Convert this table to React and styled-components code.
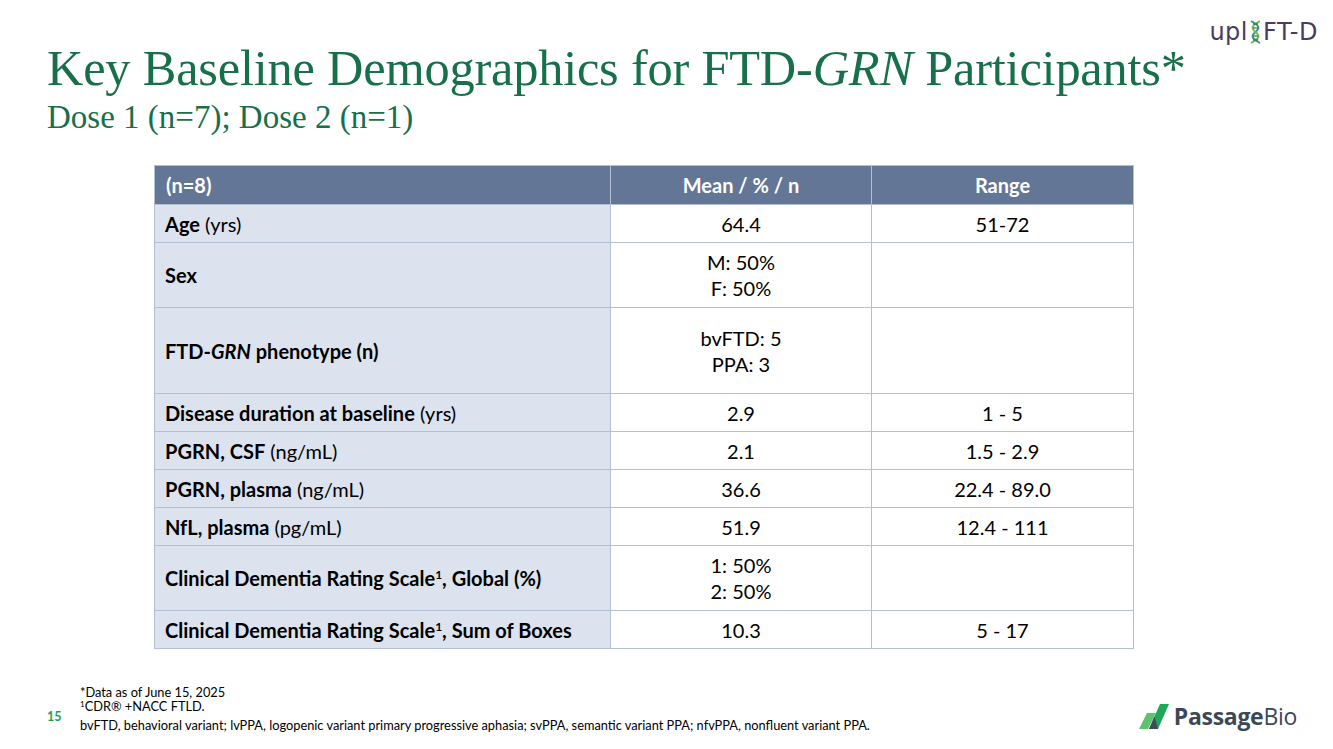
import React from 'react'
import styled, { createGlobalStyle } from 'styled-components'

const Global = createGlobalStyle`
  html, body { margin: 0; padding: 0; background: #fff; }
  body { width: 1333px; height: 749px; overflow: hidden; }
`

const Slide = styled.div`
  width: 1333px;
  height: 749px;
  box-sizing: border-box;
  display: flex;
  flex-direction: column;
  padding: 0 15px 0 47px;
  font-family: Lato, "Open Sans", sans-serif;
`

const Header = styled.div`
  display: flex;
  justify-content: space-between;
  align-items: flex-start;
`

const Titles = styled.div`
  padding-top: 40px;
  font-family: "Liberation Serif", "Times New Roman", serif;
  color: #17704a;
`

const Title = styled.h1`
  margin: 0;
  font-weight: normal;
  font-size: 50.4px;
  line-height: 56px;
  letter-spacing: -0.2px;
`

const Subtitle = styled.h2`
  margin: 3px 0 0;
  font-weight: normal;
  font-size: 33px;
  line-height: 36px;
`

const Uplift = styled.div`
  display: flex;
  align-items: center;
  margin-top: 18px;
  font-family: "DejaVu Sans", sans-serif;
  font-size: 24px;
  color: #4a3b63;
  letter-spacing: 0.5px;
`

const TableWrap = styled.div`
  margin: 30px 0 0 107px;
  width: 979px;
`

const Table = styled.table`
  width: 100%;
  border-collapse: collapse;
  table-layout: fixed;
  font-size: 20px;
  color: #000;
`

const Th = styled.th`
  background: #647696;
  color: #fff;
  font-weight: bold;
  height: 38px;
  padding: 0 11px;
  text-align: ${p => (p.$left ? 'left' : 'center')};
  border: 1px solid #b3c0d3;
`

const Tr = styled.tr`
  height: ${p => p.$h}px;
`

const Label = styled.td`
  background: #dce3ee;
  padding: 0 10px;
  border: 1px solid #b3c0d3;
  line-height: 26px;
  b { font-weight: bold; }
  sup { font-size: 12px; vertical-align: 7px; line-height: 0; }
`

const Cell = styled.td`
  background: #fff;
  text-align: center;
  padding: 0 10px;
  border: 1px solid #b3c0d3;
  line-height: 26px;
`

const Footer = styled.div`
  margin-top: auto;
  display: flex;
  justify-content: space-between;
  align-items: flex-end;
  padding-bottom: 17px;
`

const FootLeft = styled.div`
  display: flex;
  align-items: flex-end;
`

const PageNum = styled.div`
  width: 33px;
  font-size: 12.5px;
  font-weight: bold;
  color: #1f9c5a;
  padding-bottom: 8px;
`

const Notes = styled.div`
  font-size: 12.8px;
  line-height: 14px;
  color: #000;
  p { margin: 0; }
  p:last-child { margin-top: 5px; }
  sup { font-size: 8px; vertical-align: 4px; line-height: 0; }
`

const Passage = styled.div`
  display: flex;
  align-items: center;
  gap: 5px;
  margin-right: 21px;
  font-family: "Open Sans", sans-serif;
  font-size: 23px;
  color: #3d4856;
  letter-spacing: -0.3px;
  b { font-weight: 700; }
  span { font-weight: 400; }
`

const rows = [
  { h: 38, label: <><b>Age</b> (yrs)</>, mean: ['64.4'], range: '51-72' },
  { h: 65, label: <b>Sex</b>, mean: ['M: 50%', 'F: 50%'], range: '' },
  { h: 86, label: <b>FTD-<i>GRN</i> phenotype (n)</b>, mean: ['bvFTD: 5', 'PPA: 3'], range: '' },
  { h: 38, label: <><b>Disease duration at baseline</b> (yrs)</>, mean: ['2.9'], range: '1 - 5' },
  { h: 38, label: <><b>PGRN, CSF</b> (ng/mL)</>, mean: ['2.1'], range: '1.5 - 2.9' },
  { h: 38, label: <><b>PGRN, plasma</b> (ng/mL)</>, mean: ['36.6'], range: '22.4 - 89.0' },
  { h: 38, label: <><b>NfL, plasma</b> (pg/mL)</>, mean: ['51.9'], range: '12.4 - 111' },
  { h: 65, label: <b>Clinical Dementia Rating Scale<sup>1</sup>, Global (%)</b>, mean: ['1: 50%', '2: 50%'], range: '' },
  { h: 38, label: <b>Clinical Dementia Rating Scale<sup>1</sup>, Sum of Boxes</b>, mean: ['10.3'], range: '5 - 17' },
]

function Helix() {
  return (
    <svg width="13" height="26" viewBox="0 0 13 26" style={{ margin: '0 1px' }}>
      <path d="M2 2 C 11 7, 11 9, 6.5 13 C 2 17, 2 19, 11 24" stroke="#2a9d8f" strokeWidth="2" fill="none" />
      <path d="M11 2 C 2 7, 2 9, 6.5 13 C 11 17, 11 19, 2 24" stroke="#6cc04a" strokeWidth="2" fill="none" />
      <path d="M4 5 H9 M4 9 H9 M4 17 H9 M4 21 H9" stroke="#4a3b63" strokeWidth="1" />
    </svg>
  )
}

function PassageMark() {
  return (
    <svg width="32" height="27" viewBox="0 0 32 27">
      <polygon points="2,26 10,10 19,10 11,26" fill="#5cc36a" />
      <polygon points="12,26 23,1 32,1 21,26" fill="#1fa85a" />
      <polygon points="12,26 17.5,13.5 21,26" fill="#3d4a5c" />
    </svg>
  )
}

export default function App() {
  return (
    <>
      <Global />
      <Slide>
        <Header>
          <Titles>
            <Title>Key Baseline Demographics for FTD-<i>GRN</i> Participants*</Title>
            <Subtitle>Dose 1 (n=7); Dose 2 (n=1)</Subtitle>
          </Titles>
          <Uplift>upl<Helix />FT-D</Uplift>
        </Header>
        <TableWrap>
          <Table>
            <colgroup>
              <col style={{ width: 456 }} />
              <col style={{ width: 261 }} />
              <col style={{ width: 262 }} />
            </colgroup>
            <thead>
              <tr>
                <Th $left>(n=8)</Th>
                <Th>Mean / % / n</Th>
                <Th>Range</Th>
              </tr>
            </thead>
            <tbody>
              {rows.map((r, i) => (
                <Tr key={i} $h={r.h}>
                  <Label>{r.label}</Label>
                  <Cell>{r.mean.map((m, j) => <div key={j}>{m}</div>)}</Cell>
                  <Cell>{r.range}</Cell>
                </Tr>
              ))}
            </tbody>
          </Table>
        </TableWrap>
        <Footer>
          <FootLeft>
            <PageNum>15</PageNum>
            <Notes>
              <p>*Data as of June 15, 2025</p>
              <p><sup>1</sup>CDR® +NACC FTLD.</p>
              <p>bvFTD, behavioral variant; lvPPA, logopenic variant primary progressive aphasia; svPPA, semantic variant PPA; nfvPPA, nonfluent variant PPA.</p>
            </Notes>
          </FootLeft>
          <Passage>
            <PassageMark />
            <div><b>Passage</b><span>Bio</span></div>
          </Passage>
        </Footer>
      </Slide>
    </>
  )
}
